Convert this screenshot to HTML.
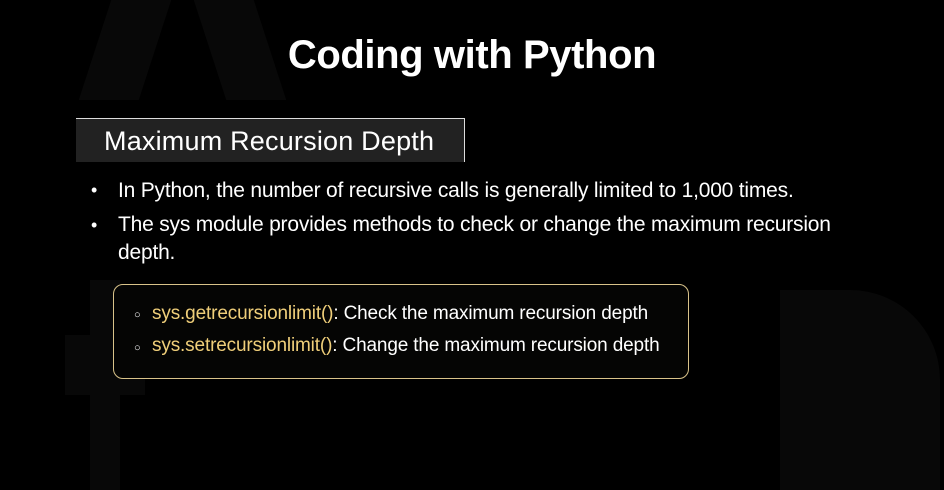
<!DOCTYPE html>
<html><head><style>
body{margin:0;width:944px;height:490px;background:#000;overflow:hidden;position:relative;font-family:"Liberation Sans",sans-serif;color:#fff}
.bg{position:absolute;background:#080808}
h1{position:absolute;left:0;width:944px;top:33px;margin:0;text-align:center;font-size:40px;font-weight:bold;letter-spacing:-0.4px}
.tb{position:absolute;left:76px;top:118px;width:389px;height:44px;background:#222;border-top:1px solid #ddd;border-right:1px solid #ddd;box-sizing:border-box}
.tb span{position:absolute;left:28px;top:7px;font-size:27px;letter-spacing:0.2px}
.b{position:absolute;font-size:21px;letter-spacing:-0.2px;line-height:28px}
.dot{position:absolute;left:91px;font-size:18px}
.box{position:absolute;left:113px;top:284px;width:576px;height:95px;border:1.5px solid #d9c38a;border-radius:10px;box-sizing:border-box;background:#050504}
.s{position:absolute;left:152px;font-size:19px;letter-spacing:-0.15px}
.s b{font-weight:normal;color:#f0cf7a}
.c{position:absolute;left:134px;font-size:11px}
</style></head><body>
<div class="bg" style="left:95px;top:0;width:60px;height:100px;transform:skewX(-18deg)"></div>
<div class="bg" style="left:210px;top:0;width:60px;height:100px;transform:skewX(18deg)"></div>
<div class="bg" style="left:65px;top:335px;width:80px;height:60px"></div>
<div class="bg" style="left:90px;top:280px;width:30px;height:210px"></div>
<div class="bg" style="left:780px;top:290px;width:160px;height:200px;border-radius:0 90px 0 0"></div>
<h1>Coding with Python</h1>
<div class="tb"><span>Maximum Recursion Depth</span></div>
<div class="dot" style="top:180px">•</div>
<div class="b" style="left:118px;top:177px;white-space:nowrap">In Python, the number of recursive calls is generally limited to 1,000 times.</div>
<div class="dot" style="top:215px">•</div>
<div class="b" style="left:118px;top:211px;width:725px">The sys module provides methods to check or change the maximum recursion depth.</div>
<div class="box"></div>
<div class="c" style="top:309px">○</div>
<div class="s" style="top:303px"><b>sys.getrecursionlimit()</b>: Check the maximum recursion depth</div>
<div class="c" style="top:342px">○</div>
<div class="s" style="top:335px"><b>sys.setrecursionlimit()</b>: Change the maximum recursion depth</div>
</body></html>
